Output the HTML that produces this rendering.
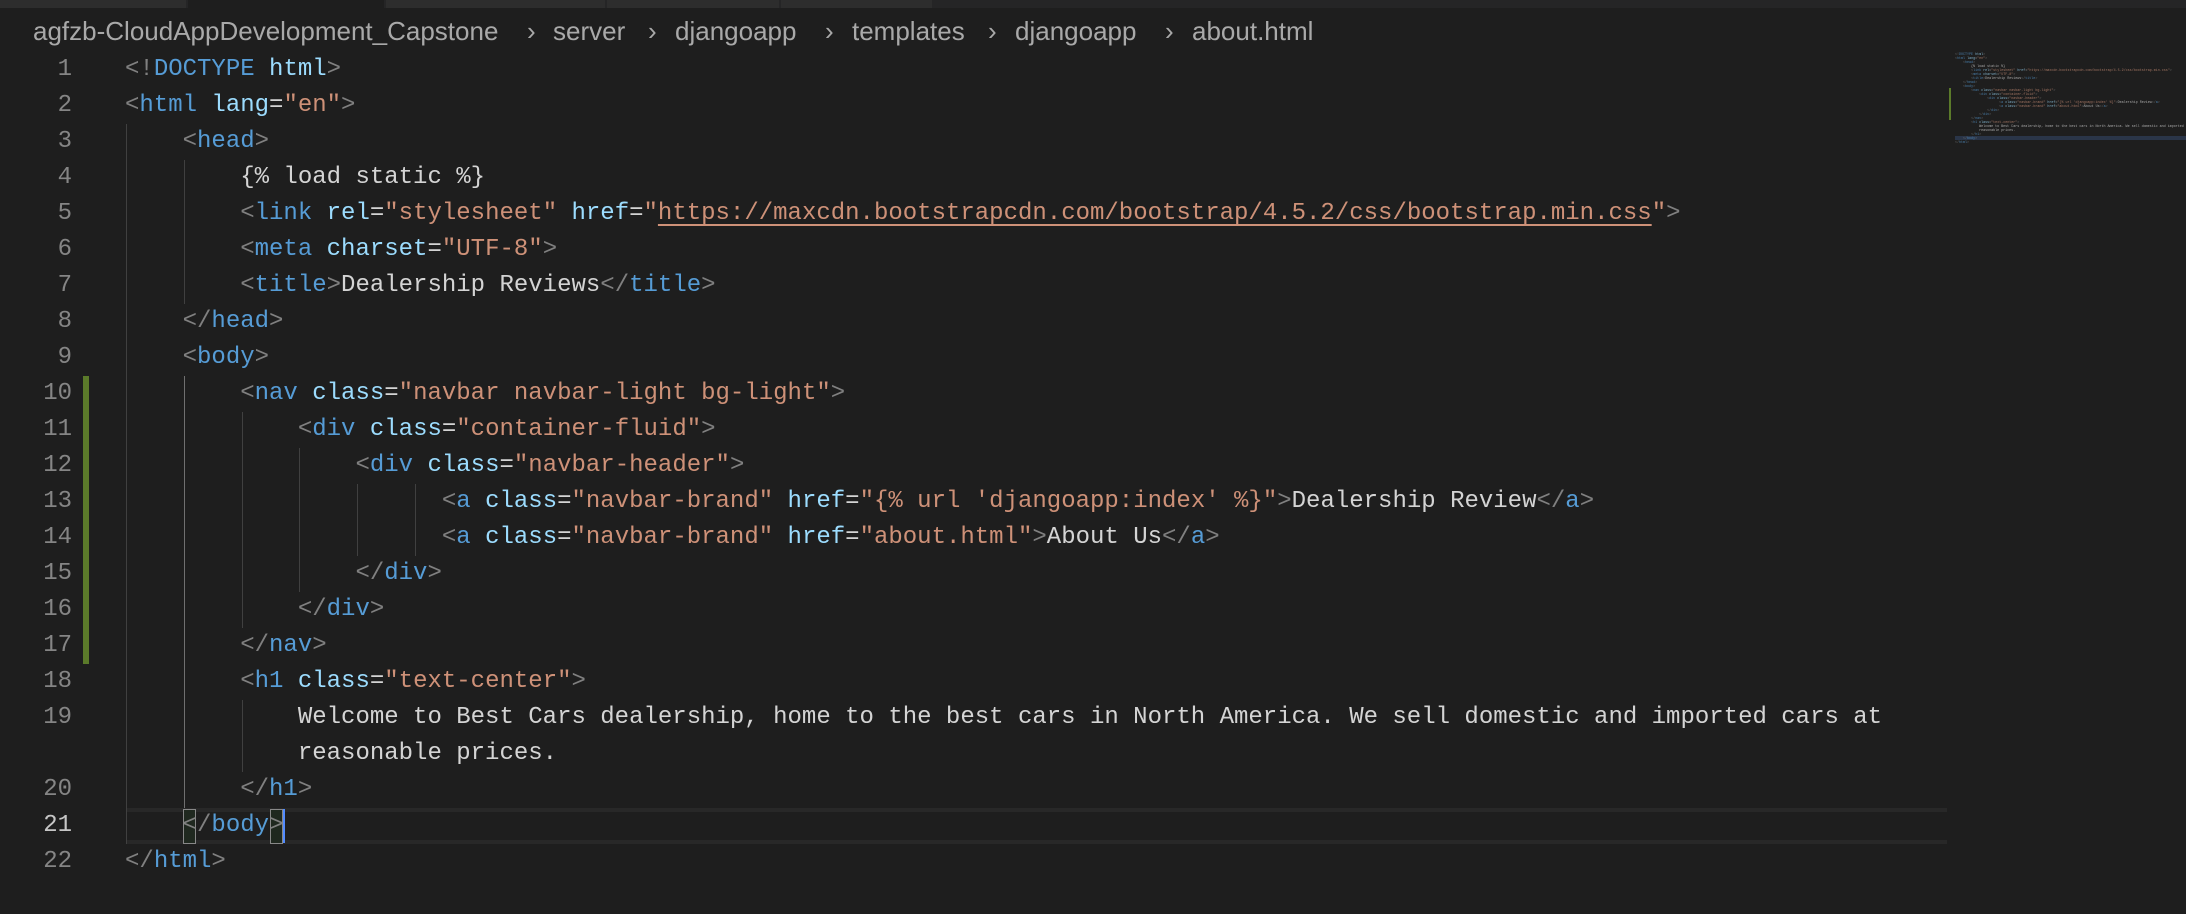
<!DOCTYPE html>
<html><head><meta charset="utf-8"><style>
html,body{margin:0;padding:0;background:#1e1e1e;width:2186px;height:914px;overflow:hidden;position:relative}
.tabs{position:absolute;left:0;top:0;width:2186px;height:8px;background:#252526}
.tab{position:absolute;top:0;height:8px;background:#2d2d2d}
.bc{position:absolute;top:13px;left:33px;font-family:"Liberation Sans",sans-serif;font-size:26px;color:#a9a9a9;white-space:nowrap;line-height:36px}
.bc span{position:absolute;top:0}
.ln{position:absolute;left:0;width:72px;text-align:right;font-family:"Liberation Mono",monospace;font-size:24px;line-height:36px;color:#858585}
.code{position:absolute;left:125px;top:52px;font-family:"Liberation Mono",monospace;font-size:24px;line-height:36px;color:#d4d4d4}
.code div{height:36px;white-space:pre}
.p{color:#808080}.t{color:#569cd6}.a{color:#9cdcfe}.s{color:#ce9178}.x{color:#d4d4d4}
.u{text-decoration:underline;text-decoration-color:#ce9178;text-underline-offset:5px;text-decoration-thickness:2px}
.g{position:absolute;width:1px;background:#404040}
.mm{position:absolute;left:1955px;top:53px;font-family:"Liberation Mono",monospace;font-size:3.35px;line-height:4px;opacity:.75;color:#d4d4d4}
.mm div{height:4px;white-space:pre}
</style></head><body>
<div class="tabs">
<div class="tab" style="left:0;width:186px"></div>
<div class="tab" style="left:188px;width:196px;background:#1e1e1e"></div>
<div class="tab" style="left:386px;width:219px"></div>
<div class="tab" style="left:607px;width:172px"></div>
<div class="tab" style="left:781px;width:151px"></div>
</div>
<div class="bc"><span style="left:0">agfzb-CloudAppDevelopment_Capstone</span><span style="left:494px">›</span><span style="left:520px">server</span><span style="left:615px">›</span><span style="left:642px">djangoapp</span><span style="left:792px">›</span><span style="left:819px">templates</span><span style="left:955px">›</span><span style="left:982px">djangoapp</span><span style="left:1132px">›</span><span style="left:1159px">about.html</span></div>

<div style="position:absolute;left:126px;top:808px;width:1821px;height:28px;border-top:4px solid #282828;border-bottom:4px solid #282828"></div>
<div style="position:absolute;left:83px;top:376px;width:6px;height:288px;background:#5b7a2a"></div>

<div class="g" style="left:126px;top:124px;height:720px"></div>
<div class="g" style="left:184px;top:160px;height:144px"></div>
<div class="g" style="left:184px;top:376px;height:432px;background:#707070"></div>
<div class="g" style="left:242px;top:412px;height:216px"></div>
<div class="g" style="left:242px;top:700px;height:72px"></div>
<div class="g" style="left:299px;top:448px;height:144px"></div>
<div class="g" style="left:357px;top:484px;height:72px"></div>
<div class="g" style="left:415px;top:484px;height:72px"></div>

<div style="position:absolute;left:183px;top:809px;width:11px;height:33px;border:1px solid #888;background:#1f281f"></div>
<div style="position:absolute;left:270px;top:809px;width:11px;height:33px;border:1px solid #888;background:#1f281f"></div>
<div style="position:absolute;left:283px;top:809px;width:2px;height:34px;background:#528bff"></div>

<div class="ln" style="top:52px">1<br>2<br>3<br>4<br>5<br>6<br>7<br>8<br>9<br>10<br>11<br>12<br>13<br>14<br>15<br>16<br>17<br>18<br>19<br><br>20<br><span style="color:#c6c6c6">21</span><br>22</div>

<div class="code"><div><span class="p">&lt;!</span><span class="t">DOCTYPE</span> <span class="a">html</span><span class="p">&gt;</span></div><div><span class="p">&lt;</span><span class="t">html</span> <span class="a">lang</span>=<span class="s">"en"</span><span class="p">&gt;</span></div><div>    <span class="p">&lt;</span><span class="t">head</span><span class="p">&gt;</span></div><div>        {% load static %}</div><div>        <span class="p">&lt;</span><span class="t">link</span> <span class="a">rel</span>=<span class="s">"stylesheet"</span> <span class="a">href</span>=<span class="s">"<span class="u">https://maxcdn.bootstrapcdn.com/bootstrap/4.5.2/css/bootstrap.min.css</span>"</span><span class="p">&gt;</span></div><div>        <span class="p">&lt;</span><span class="t">meta</span> <span class="a">charset</span>=<span class="s">"UTF-8"</span><span class="p">&gt;</span></div><div>        <span class="p">&lt;</span><span class="t">title</span><span class="p">&gt;</span>Dealership Reviews<span class="p">&lt;/</span><span class="t">title</span><span class="p">&gt;</span></div><div>    <span class="p">&lt;/</span><span class="t">head</span><span class="p">&gt;</span></div><div>    <span class="p">&lt;</span><span class="t">body</span><span class="p">&gt;</span></div><div>        <span class="p">&lt;</span><span class="t">nav</span> <span class="a">class</span>=<span class="s">"navbar navbar-light bg-light"</span><span class="p">&gt;</span></div><div>            <span class="p">&lt;</span><span class="t">div</span> <span class="a">class</span>=<span class="s">"container-fluid"</span><span class="p">&gt;</span></div><div>                <span class="p">&lt;</span><span class="t">div</span> <span class="a">class</span>=<span class="s">"navbar-header"</span><span class="p">&gt;</span></div><div>                      <span class="p">&lt;</span><span class="t">a</span> <span class="a">class</span>=<span class="s">"navbar-brand"</span> <span class="a">href</span>=<span class="s">"{% url 'djangoapp:index' %}"</span><span class="p">&gt;</span>Dealership Review<span class="p">&lt;/</span><span class="t">a</span><span class="p">&gt;</span></div><div>                      <span class="p">&lt;</span><span class="t">a</span> <span class="a">class</span>=<span class="s">"navbar-brand"</span> <span class="a">href</span>=<span class="s">"about.html"</span><span class="p">&gt;</span>About Us<span class="p">&lt;/</span><span class="t">a</span><span class="p">&gt;</span></div><div>                <span class="p">&lt;/</span><span class="t">div</span><span class="p">&gt;</span></div><div>            <span class="p">&lt;/</span><span class="t">div</span><span class="p">&gt;</span></div><div>        <span class="p">&lt;/</span><span class="t">nav</span><span class="p">&gt;</span></div><div>        <span class="p">&lt;</span><span class="t">h1</span> <span class="a">class</span>=<span class="s">"text-center"</span><span class="p">&gt;</span></div><div>            Welcome to Best Cars dealership, home to the best cars in North America. We sell domestic and imported cars at</div><div>            reasonable prices.</div><div>        <span class="p">&lt;/</span><span class="t">h1</span><span class="p">&gt;</span></div><div>    <span class="p">&lt;/</span><span class="t">body</span><span class="p">&gt;</span></div><div><span class="p">&lt;/</span><span class="t">html</span><span class="p">&gt;</span></div></div>

<div style="position:absolute;left:1949px;top:88px;width:2px;height:32px;background:#5b7a2a"></div>
<div style="position:absolute;left:1955px;top:136px;width:231px;height:4px;background:#2a3548"></div>
<div class="mm"><div><span class="p">&lt;!</span><span class="t">DOCTYPE</span> <span class="a">html</span><span class="p">&gt;</span></div><div><span class="p">&lt;</span><span class="t">html</span> <span class="a">lang</span>=<span class="s">"en"</span><span class="p">&gt;</span></div><div>    <span class="p">&lt;</span><span class="t">head</span><span class="p">&gt;</span></div><div>        {% load static %}</div><div>        <span class="p">&lt;</span><span class="t">link</span> <span class="a">rel</span>=<span class="s">"stylesheet"</span> <span class="a">href</span>=<span class="s">"https://maxcdn.bootstrapcdn.com/bootstrap/4.5.2/css/bootstrap.min.css"</span><span class="p">&gt;</span></div><div>        <span class="p">&lt;</span><span class="t">meta</span> <span class="a">charset</span>=<span class="s">"UTF-8"</span><span class="p">&gt;</span></div><div>        <span class="p">&lt;</span><span class="t">title</span><span class="p">&gt;</span>Dealership Reviews<span class="p">&lt;/</span><span class="t">title</span><span class="p">&gt;</span></div><div>    <span class="p">&lt;/</span><span class="t">head</span><span class="p">&gt;</span></div><div>    <span class="p">&lt;</span><span class="t">body</span><span class="p">&gt;</span></div><div>        <span class="p">&lt;</span><span class="t">nav</span> <span class="a">class</span>=<span class="s">"navbar navbar-light bg-light"</span><span class="p">&gt;</span></div><div>            <span class="p">&lt;</span><span class="t">div</span> <span class="a">class</span>=<span class="s">"container-fluid"</span><span class="p">&gt;</span></div><div>                <span class="p">&lt;</span><span class="t">div</span> <span class="a">class</span>=<span class="s">"navbar-header"</span><span class="p">&gt;</span></div><div>                      <span class="p">&lt;</span><span class="t">a</span> <span class="a">class</span>=<span class="s">"navbar-brand"</span> <span class="a">href</span>=<span class="s">"{% url 'djangoapp:index' %}"</span><span class="p">&gt;</span>Dealership Review<span class="p">&lt;/</span><span class="t">a</span><span class="p">&gt;</span></div><div>                      <span class="p">&lt;</span><span class="t">a</span> <span class="a">class</span>=<span class="s">"navbar-brand"</span> <span class="a">href</span>=<span class="s">"about.html"</span><span class="p">&gt;</span>About Us<span class="p">&lt;/</span><span class="t">a</span><span class="p">&gt;</span></div><div>                <span class="p">&lt;/</span><span class="t">div</span><span class="p">&gt;</span></div><div>            <span class="p">&lt;/</span><span class="t">div</span><span class="p">&gt;</span></div><div>        <span class="p">&lt;/</span><span class="t">nav</span><span class="p">&gt;</span></div><div>        <span class="p">&lt;</span><span class="t">h1</span> <span class="a">class</span>=<span class="s">"text-center"</span><span class="p">&gt;</span></div><div>            Welcome to Best Cars dealership, home to the best cars in North America. We sell domestic and imported</div><div>            reasonable prices.</div><div>        <span class="p">&lt;/</span><span class="t">h1</span><span class="p">&gt;</span></div><div>    <span class="p">&lt;/</span><span class="t">body</span><span class="p">&gt;</span></div><div><span class="p">&lt;/</span><span class="t">html</span><span class="p">&gt;</span></div></div>
</body></html>
